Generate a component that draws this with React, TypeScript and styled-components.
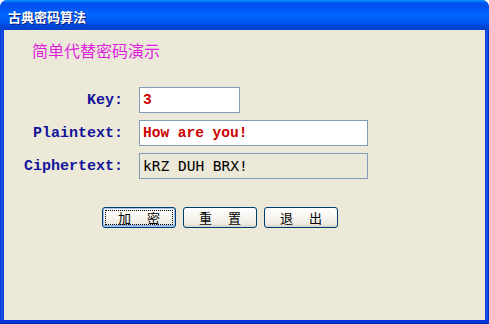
import React from "react";
import styled, { createGlobalStyle } from "styled-components";

const Global = createGlobalStyle`
  html, body { margin: 0; padding: 0; background: #ffffff; }
  * { box-sizing: border-box; }
`;

const Window = styled.div`
  width: 489px;
  height: 324px;
  display: flex;
  flex-direction: column;
  background: linear-gradient(to right, #0a2ec8 0, #1660f0 2px, #0831d9 4px, #0831d9 485px, #1660f0 487px, #0022b0 489px);
  border-radius: 7px 7px 0 0;
  padding: 0 4px 4px;
  overflow: hidden;
  position: relative;
  &::after {
    content: "";
    position: absolute;
    left: 0;
    right: 0;
    bottom: 0;
    height: 4px;
    background: linear-gradient(to bottom, #0831d9 0, #0a3ae0 2px, #001ea0 4px);
  }
`;

const TitleBar = styled.div`
  height: 30px;
  margin: 0 -4px;
  padding: 2px 0 0 8px;
  display: flex;
  align-items: center;
  border-radius: 7px 7px 0 0;
  background: linear-gradient(
    to bottom,
    #0997ff 0px,
    #0053ee 3px,
    #0050ee 6px,
    #0066ff 14px,
    #0058f4 22px,
    #0046d8 26px,
    #0840c8 30px
  );
  font-family: "Noto Sans CJK SC", sans-serif;
  font-weight: 700;
  font-size: 13px;
  color: #ffffff;
  text-shadow: 1px 1px 0 #0a1e78;
`;

const Body = styled.div`
  flex: 1;
  background: #ece9d8;
  padding: 9px 0 0 28px;
  display: flex;
  flex-direction: column;
`;

const Heading = styled.div`
  font-family: "Noto Sans CJK SC", sans-serif;
  font-size: 16px;
  line-height: 22px;
  color: #e01ee0;
`;

const Form = styled.div`
  display: grid;
  grid-template-columns: 91px auto;
  column-gap: 16px;
  row-gap: 7px;
  margin-top: 26px;
  align-items: center;
  justify-items: start;
`;

const Label = styled.div`
  justify-self: end;
  font-family: "Liberation Mono", monospace;
  font-weight: 700;
  font-size: 15px;
  color: #14149a;
  white-space: nowrap;
`;

const Field = styled.div<{ $w: number; $readOnly?: boolean; $bold?: boolean }>`
  width: ${(p) => p.$w}px;
  height: 26px;
  border: 1px solid #7f9db9;
  background: ${(p) => (p.$readOnly ? "#ece9d8" : "#ffffff")};
  padding: 0 0 0 3px;
  display: flex;
  align-items: center;
  font-family: ${(p) => (p.$bold ? '"Liberation Mono", monospace' : '"DejaVu Sans Mono", monospace')};
  font-weight: ${(p) => (p.$bold ? 700 : 400)};
  font-size: 14.5px;
  color: ${(p) => (p.$readOnly ? "#000000" : "#cc0000")};
  white-space: pre;
`;

const Buttons = styled.div`
  display: flex;
  gap: 7px;
  margin: 28px 0 0 70px;
`;

const Button = styled.button<{ $focused?: boolean }>`
  width: 74px;
  height: 21px;
  padding: 0;
  border: 1px solid #003c74;
  border-radius: 3px;
  background: linear-gradient(to bottom, #ffffff 0%, #f6f5f0 50%, #ece9e0 85%, #d6d0c5 100%);
  font-family: "Noto Sans CJK SC", sans-serif;
  font-size: 13px;
  word-spacing: 13px;
  color: #000000;
  white-space: pre;
  position: relative;
  box-shadow: ${(p) => (p.$focused ? "inset 0 0 0 1px #a8c4f0, inset 0 -1px 0 1px #89aee8" : "none")};
  &::after {
    content: "";
    display: ${(p) => (p.$focused ? "block" : "none")};
    position: absolute;
    inset: 2px;
    border: 1px dotted #000000;
  }
`;

export default function App() {
  return (
    <>
      <Global />
      <Window>
        <TitleBar>古典密码算法</TitleBar>
        <Body>
          <Heading>简单代替密码演示</Heading>
          <Form>
            <Label>Key:</Label>
            <Field $w={101} $bold>3</Field>
            <Label>Plaintext:</Label>
            <Field $w={229} $bold>How are you!</Field>
            <Label>Ciphertext:</Label>
            <Field $w={229} $readOnly>kRZ DUH BRX!</Field>
          </Form>
          <Buttons>
            <Button $focused>加 密</Button>
            <Button>重 置</Button>
            <Button>退 出</Button>
          </Buttons>
        </Body>
      </Window>
    </>
  );
}
